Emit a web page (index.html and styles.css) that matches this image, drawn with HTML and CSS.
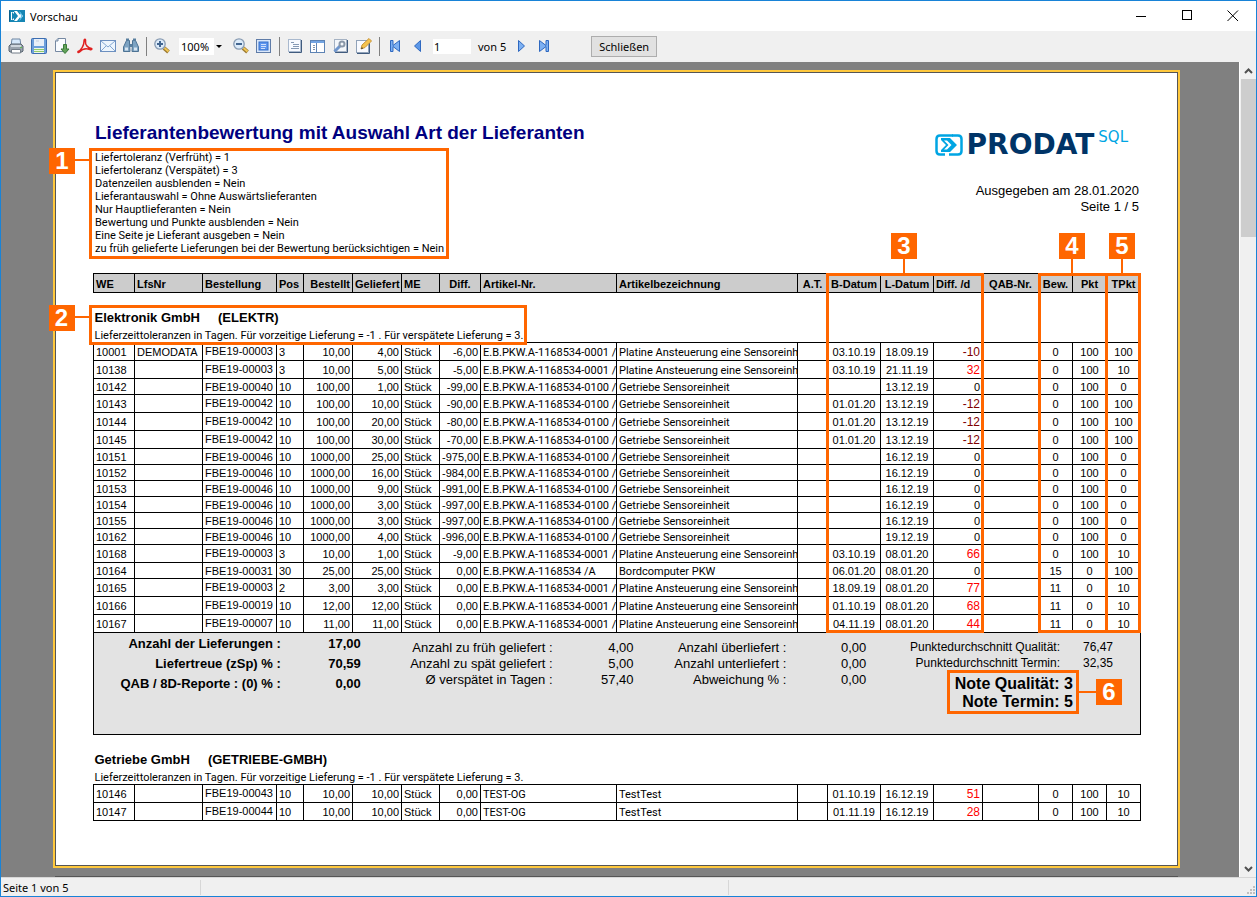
FILE: index.html
```html
<!DOCTYPE html>
<html lang="de">
<head>
<meta charset="utf-8">
<title>Vorschau</title>
<link rel="stylesheet" href="styles.css">
</head>
<body>
<div class="window">
  <header class="titlebar">
    <svg class="app-icon" width="16" height="14" viewBox="0 0 16 14"><path d="M0 1h16v12H0z" fill="#1686b4"/><path d="M2 3h3v8H2z" fill="#fff"/><path d="M5 2h3l4 5-4 5H5l4-5z" fill="#fff"/><path d="M3 3l4 4-4 4z" fill="#1686b4"/><path d="M11 3l3 4-3 4z" fill="#e9f6fc"/><path d="M10.500 2.500L13 7l-2.500 4.500" stroke="#3fb4e4" fill="none"/><path d="M.5 1.500v11" stroke="#0b5f8c"/></svg>
    <h1 class="window-title">Vorschau</h1>
    <button class="win-btn" aria-label="Minimieren"><svg width="12" height="12"><path d="M1 6.500h10" stroke="#000"/></svg></button>
    <button class="win-btn" aria-label="Maximieren"><svg width="12" height="12"><rect x="1.500" y=".5" width="9" height="9" fill="none" stroke="#000"/></svg></button>
    <button class="win-btn" aria-label="Fenster schließen"><svg width="12" height="12"><path d="M.5.5l10.500 10.500M11 .5L.5 11" stroke="#000" fill="none"/></svg></button>
  </header>

  <div class="toolbar">
    <button class="tool" aria-label="Drucken"><svg width="16" height="16"><path d="M4 1h8l1 7H3z" fill="#d6e8fb" stroke="#6f87a3"/><path d="M1 8l2-2h10l2 2v5l-1 1H2l-1-1z" fill="#9aa3ae" stroke="#596470"/><path d="M3 7h10v2H3z" fill="#cfd6de"/><path d="M3.500 11.500h9v3.500h-9z" fill="#fff" stroke="#737d88"/><path d="M12 9.500h2" stroke="#5fbd4d"/></svg></button>
    <button class="tool" aria-label="Speichern"><svg width="16" height="16"><rect x=".5" y=".5" width="15" height="15" rx="1" fill="#6c9fdc" stroke="#3c6db0"/><path d="M3 1h10v7H3z" fill="#e8eff8"/><path d="M5 3h3" stroke="#c3cddd"/><path d="M3 10h10v5H3z" fill="#eef6e8"/><path d="M3 11.500h10M3 13.500h10" stroke="#91cb69"/></svg></button>
    <button class="tool" aria-label="Exportieren"><svg width="16" height="16"><path d="M4 .5h7.500v13H1.500V3z" fill="#fafcff" stroke="#7689a2"/><path d="M4 .5V3H1.500" fill="#c9d5e4" stroke="#7689a2"/><path d="M9.500 6.500h3V11h2.500l-4 4.500-4-4.500h2.500z" fill="#62a25a" stroke="#397a37"/></svg></button>
    <button class="tool" aria-label="Als PDF speichern"><svg width="16" height="16"><path d="M1 13.500C4 12.500 7 7.500 7 3.500 7 .5 9 .5 8.500 3.500 8 7 11 10 14.500 10.500c1 .5 0 1.500-1.500 1C9 10 5.500 10.500 2.500 14c-1 1-2 .5-1.500-.5z" fill="none" stroke="#e02020" stroke-width="1.500"/></svg></button>
    <button class="tool" aria-label="Per E-Mail senden"><svg width="16" height="16"><rect x=".5" y="2.500" width="15" height="11" fill="#edf5fd" stroke="#6d90c0"/><path d="M1 13l5-5M15 13l-5-5M1 3l7 6 7-6" fill="none" stroke="#83a7d2"/></svg></button>
    <button class="tool" aria-label="Suchen"><svg width="16" height="16"><path d="M3.500 2.500h3V5L7 13.500H.5V9zM9.500 2.500h3L15.500 9v4.500H9L9.500 5z" fill="#7da3c2" stroke="#4d7394"/><path d="M7 6h2v3H7zM3 .5h3V3H3zM10 .5h3V3h-3z" fill="#587e9e"/><path d="M2 9.500h3v3H2zM11 9.500h3v3h-3z" fill="#d8e6f2"/></svg></button>
    <span class="sep"></span>
    <button class="tool" aria-label="Vergrößern"><svg width="16" height="16"><path d="M10 10l4.500 4" stroke="#9b7931" stroke-width="4"/><path d="M10.500 10l4 3.500" stroke="#f1c756" stroke-width="2"/><circle cx="6" cy="6" r="5.200" fill="#dcebfa" stroke="#889bb2" stroke-width="1.300"/><path d="M3 6h6M6 3v6" stroke="#416590" stroke-width="2"/></svg></button>
    <span class="zoom"><select aria-label="Zoom"><option>100%</option></select></span>
    <button class="tool" aria-label="Verkleinern"><svg width="16" height="16"><path d="M10 10l4.500 4" stroke="#9b7931" stroke-width="4"/><path d="M10.500 10l4 3.500" stroke="#f1c756" stroke-width="2"/><circle cx="6" cy="6" r="5.200" fill="#dcebfa" stroke="#889bb2" stroke-width="1.300"/><path d="M3 6h6" stroke="#416590" stroke-width="2"/></svg></button>
    <button class="tool" aria-label="Ganze Seite"><svg width="16" height="16"><rect x=".5" y="1.500" width="14" height="13" fill="#dbe8fa" stroke="#5f7ca8"/><rect x="3" y="4" width="9" height="8" fill="#5f96ee" stroke="#346fc9"/><path d="M5 6.500h5M5 8.500h5M5 10.500h4" stroke="#cfe0fb"/></svg></button>
    <span class="sep"></span>
    <button class="tool" aria-label="Gliederung"><svg width="16" height="16"><rect x="1.500" y="1.500" width="12" height="12" fill="#f7faff" stroke="#a9b9ce"/><path d="M2 14.500h12.500V2" stroke="#405b7e" fill="none"/><path d="M4 4.500h3M6 6.500h6M6 8.500h6M4 10.500h8" stroke="#8499b4"/></svg></button>
    <button class="tool" aria-label="Miniaturen"><svg width="16" height="16"><rect x=".5" y="2.500" width="14" height="12" fill="#fff" stroke="#5d83b4"/><path d="M1 3h13v2H1z" fill="#73a4e2"/><path d="M6.500 5v9" stroke="#5d83b4"/><path d="M3 7.500h2M3 9.500h2M3 11.500h2" stroke="#8193a9"/></svg></button>
    <button class="tool" aria-label="Seite einrichten"><svg width="16" height="16"><rect x="1.500" y="1.500" width="12" height="12" fill="#f4f7fb" stroke="#a5b2c3"/><path d="M2 14.500h12.500V2" stroke="#405b7e" fill="none"/><path d="M1.500 13.500l6-6" stroke="#7197cd" stroke-width="3"/><circle cx="9" cy="6" r="2.500" fill="none" stroke="#8a98a9" stroke-width="2"/></svg></button>
    <button class="tool" aria-label="Bearbeiten"><svg width="16" height="16"><rect x=".5" y="2.500" width="12" height="12" fill="#f8faff" stroke="#90a2b9"/><path d="M1 15.500h12.500V5" stroke="#405b7e" fill="none"/><path d="M5 11l1-4 7-6.500 2.500 2.500L9 9.500z" fill="#f6c44e" stroke="#c8953a"/><path d="M5 11l2-.5L6 9z" fill="#333"/></svg></button>
    <span class="sep"></span>
    <button class="tool" aria-label="Erste Seite"><svg width="16" height="16"><path d="M3.500 2.500h2.500v5l6.500-5v11L6 8.500v5H3.500z" fill="#7db0f2" stroke="#2e68c0"/></svg></button>
    <button class="tool" aria-label="Vorherige Seite"><svg width="16" height="16"><path d="M10.500 2.500v11L4.500 8z" fill="#5c98e8" stroke="#2e68c0"/></svg></button>
    <input class="page-no" type="text" value="1" aria-label="Seite">
    <span class="page-of">von 5</span>
    <button class="tool" aria-label="Nächste Seite"><svg width="16" height="16"><path d="M5.500 2.500v11l6-5.500z" fill="#7db0f2" stroke="#2e68c0"/></svg></button>
    <button class="tool" aria-label="Letzte Seite"><svg width="16" height="16"><path d="M3.500 2.500v11l6.500-5v5h2.500v-11H10v5z" fill="#7db0f2" stroke="#2e68c0"/></svg></button>
    <button class="close-btn">Schließen</button>
  </div>

  <div class="workspace">
    <main class="canvas">
      <article class="page">
        <header class="report-head">
          <div class="report-info">
            <h2 class="report-title">Lieferantenbewertung mit Auswahl Art der Lieferanten</h2>
            <ul class="params marked">
              <li>Liefertoleranz (Verfrüht) = 1</li>
              <li>Liefertoleranz (Verspätet) = 3</li>
              <li>Datenzeilen ausblenden = Nein</li>
              <li>Lieferantauswahl = Ohne Auswärtslieferanten</li>
              <li>Nur Hauptlieferanten = Nein</li>
              <li>Bewertung und Punkte ausblenden = Nein</li>
              <li>Eine Seite je Lieferant ausgeben = Nein</li>
              <li>zu früh gelieferte Lieferungen bei der Bewertung berücksichtigen = Nein</li>
              <li class="badge badge-left">1</li>
            </ul>
          </div>
          <div class="report-brand">
            <div class="logo">
              <svg width="28" height="22" viewBox="0 0 28 22"><path d="M10 1.500H5Q1.500 1.500 1.500 5v12q0 3.500 3.500 3.500h5M17 1.500h6q3.500 0 3.500 3.500v12q0 3.500-3.500 3.500h-9" fill="none" stroke="#00a5e3" stroke-width="2.500"/><path d="M10 1.500h8" stroke="#00a5e3" stroke-width="2.500"/><path d="M6 4h9l7 7-7 7H6v-2l5-5-5-5z" fill="#00a5e3"/><path d="M9 6.500h3l4.500 4.500-4.500 4.500H9l4.500-4.500z" fill="#fff"/></svg>
              <span class="logo-name">PRODAT</span><span class="logo-sql">SQL</span>
            </div>
            <p>Ausgegeben am 28.01.2020</p>
            <p>Seite 1 / 5</p>
          </div>
        </header>

        <div class="report-body">
          <table class="report">
            <colgroup><col class="w41"><col class="w68"><col class="w74"><col class="w27"><col class="w49"><col class="w49"><col class="w38"><col class="w41"><col class="w136"><col class="w181"><col class="w30"><col class="w53"><col class="w53"><col class="w49"><col class="w56"><col class="w34"><col class="w34"><col class="w34"></colgroup>
            <thead>
              <tr><th>WE</th><th>LfsNr</th><th>Bestellung</th><th>Pos</th><th>Bestellt</th><th>Geliefert</th><th>ME</th><th>Diff.</th><th>Artikel-Nr.</th><th>Artikelbezeichnung</th><th>A.T.</th><th>B-Datum</th><th>L-Datum</th><th>Diff. /d</th><th>QAB-Nr.</th><th>Bew.</th><th>Pkt</th><th>TPkt</th></tr>
            </thead>
            <tbody>
              <tr class="group"><td colspan="18"><div class="group-head"><h3>Elektronik GmbH &nbsp;&nbsp;&nbsp; (ELEKTR)</h3><p>Lieferzeittoleranzen in Tagen. Für vorzeitige Lieferung = -1 . Für verspätete Lieferung = 3.</p><div class="group-mark marked"><span class="badge badge-left">2</span></div></div></td></tr>
              <tr class="tall"><td>10001</td><td>DEMODATA</td><td>FBE19-00003</td><td>3</td><td>10,00</td><td>4,00</td><td>Stück</td><td>-6,00</td><td>E.B.PKW.A-1168534-0001 /</td><td>Platine Ansteuerung eine Sensoreinh</td><td></td><td>03.10.19</td><td>18.09.19</td><td class="early">-10</td><td></td><td>0</td><td>100</td><td>100</td></tr>
              <tr class="tall"><td>10138</td><td></td><td>FBE19-00003</td><td>3</td><td>10,00</td><td>5,00</td><td>Stück</td><td>-5,00</td><td>E.B.PKW.A-1168534-0001 /</td><td>Platine Ansteuerung eine Sensoreinh</td><td></td><td>03.10.19</td><td>21.11.19</td><td class="late">32</td><td></td><td>0</td><td>100</td><td>10</td></tr>
              <tr><td>10142</td><td></td><td>FBE19-00040</td><td>10</td><td>100,00</td><td>1,00</td><td>Stück</td><td>-99,00</td><td>E.B.PKW.A-1168534-0100 /</td><td>Getriebe Sensoreinheit</td><td></td><td></td><td>13.12.19</td><td>0</td><td></td><td>0</td><td>100</td><td>0</td></tr>
              <tr class="tall"><td>10143</td><td></td><td>FBE19-00042</td><td>10</td><td>100,00</td><td>10,00</td><td>Stück</td><td>-90,00</td><td>E.B.PKW.A-1168534-0100 /</td><td>Getriebe Sensoreinheit</td><td></td><td>01.01.20</td><td>13.12.19</td><td class="early">-12</td><td></td><td>0</td><td>100</td><td>100</td></tr>
              <tr class="tall"><td>10144</td><td></td><td>FBE19-00042</td><td>10</td><td>100,00</td><td>20,00</td><td>Stück</td><td>-80,00</td><td>E.B.PKW.A-1168534-0100 /</td><td>Getriebe Sensoreinheit</td><td></td><td>01.01.20</td><td>13.12.19</td><td class="early">-12</td><td></td><td>0</td><td>100</td><td>100</td></tr>
              <tr class="tall"><td>10145</td><td></td><td>FBE19-00042</td><td>10</td><td>100,00</td><td>30,00</td><td>Stück</td><td>-70,00</td><td>E.B.PKW.A-1168534-0100 /</td><td>Getriebe Sensoreinheit</td><td></td><td>01.01.20</td><td>13.12.19</td><td class="early">-12</td><td></td><td>0</td><td>100</td><td>100</td></tr>
              <tr><td>10151</td><td></td><td>FBE19-00046</td><td>10</td><td>1000,00</td><td>25,00</td><td>Stück</td><td>-975,00</td><td>E.B.PKW.A-1168534-0100 /</td><td>Getriebe Sensoreinheit</td><td></td><td></td><td>16.12.19</td><td>0</td><td></td><td>0</td><td>100</td><td>0</td></tr>
              <tr><td>10152</td><td></td><td>FBE19-00046</td><td>10</td><td>1000,00</td><td>16,00</td><td>Stück</td><td>-984,00</td><td>E.B.PKW.A-1168534-0100 /</td><td>Getriebe Sensoreinheit</td><td></td><td></td><td>16.12.19</td><td>0</td><td></td><td>0</td><td>100</td><td>0</td></tr>
              <tr><td>10153</td><td></td><td>FBE19-00046</td><td>10</td><td>1000,00</td><td>9,00</td><td>Stück</td><td>-991,00</td><td>E.B.PKW.A-1168534-0100 /</td><td>Getriebe Sensoreinheit</td><td></td><td></td><td>16.12.19</td><td>0</td><td></td><td>0</td><td>100</td><td>0</td></tr>
              <tr><td>10154</td><td></td><td>FBE19-00046</td><td>10</td><td>1000,00</td><td>3,00</td><td>Stück</td><td>-997,00</td><td>E.B.PKW.A-1168534-0100 /</td><td>Getriebe Sensoreinheit</td><td></td><td></td><td>16.12.19</td><td>0</td><td></td><td>0</td><td>100</td><td>0</td></tr>
              <tr><td>10155</td><td></td><td>FBE19-00046</td><td>10</td><td>1000,00</td><td>3,00</td><td>Stück</td><td>-997,00</td><td>E.B.PKW.A-1168534-0100 /</td><td>Getriebe Sensoreinheit</td><td></td><td></td><td>16.12.19</td><td>0</td><td></td><td>0</td><td>100</td><td>0</td></tr>
              <tr><td>10162</td><td></td><td>FBE19-00046</td><td>10</td><td>1000,00</td><td>4,00</td><td>Stück</td><td>-996,00</td><td>E.B.PKW.A-1168534-0100 /</td><td>Getriebe Sensoreinheit</td><td></td><td></td><td>19.12.19</td><td>0</td><td></td><td>0</td><td>100</td><td>0</td></tr>
              <tr class="tall"><td>10168</td><td></td><td>FBE19-00003</td><td>3</td><td>10,00</td><td>1,00</td><td>Stück</td><td>-9,00</td><td>E.B.PKW.A-1168534-0001 /</td><td>Platine Ansteuerung eine Sensoreinh</td><td></td><td>03.10.19</td><td>08.01.20</td><td class="late">66</td><td></td><td>0</td><td>100</td><td>10</td></tr>
              <tr><td>10164</td><td></td><td>FBE19-00031</td><td>30</td><td>25,00</td><td>25,00</td><td>Stück</td><td>0,00</td><td>E.B.PKW.A-1168534 /A</td><td>Bordcomputer PKW</td><td></td><td>06.01.20</td><td>08.01.20</td><td>0</td><td></td><td>15</td><td>0</td><td>100</td></tr>
              <tr class="tall"><td>10165</td><td></td><td>FBE19-00003</td><td>2</td><td>3,00</td><td>3,00</td><td>Stück</td><td>0,00</td><td>E.B.PKW.A-1168534-0001 /</td><td>Platine Ansteuerung eine Sensoreinh</td><td></td><td>18.09.19</td><td>08.01.20</td><td class="late">77</td><td></td><td>11</td><td>0</td><td>10</td></tr>
              <tr class="tall"><td>10166</td><td></td><td>FBE19-00019</td><td>10</td><td>12,00</td><td>12,00</td><td>Stück</td><td>0,00</td><td>E.B.PKW.A-1168534-0001 /</td><td>Platine Ansteuerung eine Sensoreinh</td><td></td><td>01.10.19</td><td>08.01.20</td><td class="late">68</td><td></td><td>11</td><td>0</td><td>10</td></tr>
              <tr class="tall"><td>10167</td><td></td><td>FBE19-00007</td><td>10</td><td>11,00</td><td>11,00</td><td>Stück</td><td>0,00</td><td>E.B.PKW.A-1168534-0001 /</td><td>Platine Ansteuerung eine Sensoreinh</td><td></td><td>04.11.19</td><td>08.01.20</td><td class="late">44</td><td></td><td>11</td><td>0</td><td>10</td></tr>
              <tr class="summary-row"><td colspan="18">
                <div class="summary">
                  <dl class="totals"><dt>Anzahl der Lieferungen :</dt><dd>17,00</dd><dt>Liefertreue (zSp) % :</dt><dd>70,59</dd><dt>QAB / 8D-Reporte : (0) % :</dt><dd>0,00</dd></dl>
                  <dl class="delays"><dt>Anzahl zu früh geliefert :</dt><dd>4,00</dd><dt>Anzahl zu spät geliefert :</dt><dd>5,00</dd><dt>Ø verspätet in Tagen :</dt><dd>57,40</dd></dl>
                  <dl class="amounts"><dt>Anzahl überliefert :</dt><dd>0,00</dd><dt>Anzahl unterliefert :</dt><dd>0,00</dd><dt>Abweichung % :</dt><dd>0,00</dd></dl>
                  <div class="scores">
                    <dl class="averages"><dt>Punktedurchschnitt Qualität:</dt><dd>76,47</dd><dt>Punktedurchschnitt Termin:</dt><dd>32,35</dd></dl>
                    <div class="grades marked"><p>Note Qualität: 3</p><p>Note Termin: 5</p><span class="badge badge-right">6</span></div>
                  </div>
                </div>
              </td></tr>
            </tbody>
            <tbody>
              <tr class="group"><td colspan="18"><div class="group-head"><h3>Getriebe GmbH &nbsp;&nbsp;&nbsp; (GETRIEBE-GMBH)</h3><p>Lieferzeittoleranzen in Tagen. Für vorzeitige Lieferung = -1 . Für verspätete Lieferung = 3.</p></div></td></tr>
              <tr class="tall"><td>10146</td><td></td><td>FBE19-00043</td><td>10</td><td>10,00</td><td>10,00</td><td>Stück</td><td>0,00</td><td>TEST-OG</td><td>TestTest</td><td></td><td>01.10.19</td><td>16.12.19</td><td class="late">51</td><td></td><td>0</td><td>100</td><td>10</td></tr>
              <tr class="tall"><td>10147</td><td></td><td>FBE19-00044</td><td>10</td><td>10,00</td><td>10,00</td><td>Stück</td><td>0,00</td><td>TEST-OG</td><td>TestTest</td><td></td><td>01.11.19</td><td>16.12.19</td><td class="late">28</td><td></td><td>0</td><td>100</td><td>10</td></tr>
            </tbody>
          </table>
          <div class="column-marks">
            <div class="mark-dates marked"><span class="badge badge-top">3</span></div>
            <div class="mark-points marked"><span class="badge badge-top">4</span></div>
            <div class="mark-total marked"><span class="badge badge-top">5</span></div>
          </div>
        </div>
      </article>
      <div class="next-page"></div>
    </main>
    <div class="scrollbar">
      <svg width="15" height="17"><path d="M4 11l3.500-3.500L11 11" fill="none" stroke="#505050" stroke-width="2"/></svg>
      <div class="thumb"></div>
      <svg class="down" width="15" height="16"><path d="M4 6l3.500 3.500L11 6" fill="none" stroke="#505050" stroke-width="2"/></svg>
    </div>
  </div>

  <footer class="statusbar">
    <span class="status-page">Seite 1 von 5</span>
    <span class="status-mid"></span>
    <svg class="grip" width="10" height="10"><path d="M7 0h2v2H7zM4 3h2v2H4zM7 3h2v2H7zM1 6h2v2H1zM4 6h2v2H4zM7 6h2v2H7z" fill="#bfbfbf"/></svg>
  </footer>
</div>
</body>
</html>
```

FILE: styles.css
```css
* { box-sizing: border-box; }
body, h1, h2, h3, p, ul, dl, dt, dd { margin: 0; padding: 0; }
body { font-family: "Liberation Sans", Arial, sans-serif; font-size: 11px; color: #000; }
button { padding: 0; border: 0; background: none; font: inherit; color: inherit; }

.window {
  display: flex; flex-direction: column;
  height: 100vh; border: 1px solid #1883d7; background: #fff;
  overflow: hidden;
}

.titlebar { display: flex; align-items: center; height: 30px; padding-left: 8px; font-family: "Noto Sans", "Open Sans", sans-serif; }
.window-title { flex: 1; margin-left: 5px; font-size: 11px; font-weight: 400; }
.win-btn { display: flex; align-items: center; justify-content: center; width: 46px; height: 30px; }

.toolbar {
  display: flex; align-items: center; gap: 7px;
  height: 31px; padding-left: 7px; background: #f0f0f0;
  font-family: "Noto Sans", "Open Sans", sans-serif; font-size: 11px;
}
.tool { width: 16px; height: 16px; margin-bottom: 2px; }
.tool svg { display: block; }
.sep { width: 1px; height: 19px; background: #808080; }
.zoom { position: relative; width: 46px; height: 17px; margin: 0 1px 0 2px; background: #fff; }
.zoom select { width: 100%; height: 100%; padding: 0 0 0 2px; border: 0; background: none; appearance: none; font: inherit; color: #000; }
.zoom::before { content: ""; position: absolute; right: 0; top: 0; bottom: 0; width: 11px; background: #f0f0f0; }
.zoom::after { content: ""; position: absolute; right: 3px; top: 7px; border: 3px solid transparent; border-top-color: #000; border-bottom: 0; }
.page-no { width: 38px; height: 15px; padding: 0 1px; border: 0; background: #fff; font: inherit; }
.close-btn { width: 66px; height: 21px; margin-left: 32px; border: 1px solid #adadad; background: #e1e1e1; }

.workspace { display: flex; flex: 1; min-height: 0; background: #808080; }
.canvas { flex: 1; min-width: 0; padding: 8px 59px 0 52px; overflow: hidden; }
.page {
  padding: 48px 36px 44px 37px;
  border: 1px solid #555; outline: 2px solid #ffc83c;
  margin: 2px; background: #fff;
}
.next-page { margin: 10px 2px 0; border-top: 1px solid #555; }

.report-head { display: flex; justify-content: space-between; margin-bottom: 14px; }
.report-title { padding-left: 2px; margin-bottom: 3px; font-size: 19px; line-height: 24px; color: #000080; }

.marked { border: 3px solid #f60; }
.badge {
  position: absolute; width: 26px; height: 26px;
  background: #f60; color: #fff;
  font: 700 24px/26px "Liberation Sans", Arial, sans-serif; text-align: center;
}
.badge::after { content: ""; position: absolute; background: #f60; }
.badge-left { left: -43px; top: -3px; }
.badge-left::after { left: 26px; top: 11px; width: 14px; height: 2px; }
.badge-right { right: -46px; top: 6px; }
.badge-right::after { right: 26px; top: 12px; width: 17px; height: 2px; }
.badge-top { left: 50%; top: -43px; margin-left: -14px; }
.badge-top::after { left: 12px; top: 26px; width: 2px; height: 14px; }

.params, .group-head p, .report td:nth-child(9), .report td:nth-child(10) { font-family: Roboto, "Liberation Sans", sans-serif; }
.params { position: relative; width: fit-content; margin-left: -4px; padding: 0 2px 1px 3px; list-style: none; line-height: 13px; white-space: nowrap; }
.report-brand { padding: 9px 2px 0 0; text-align: right; font-size: 13px; line-height: 16px; }
.logo { display: flex; align-items: center; justify-content: flex-end; height: 30px; margin: 0 11px 23px 0; }
.logo-name { margin-left: 4px; color: #003467; font: 700 28px/30px "DejaVu Sans", sans-serif; }
.logo-sql { align-self: flex-start; margin-left: 4px; color: #00a5e3; font: 400 15px/14px "DejaVu Sans", sans-serif; }

.report-body { position: relative; }
.report { width: 100%; table-layout: fixed; border-collapse: collapse; line-height: 13px; white-space: nowrap; }
.w27 { width: 27px; } .w30 { width: 30px; } .w34 { width: 34px; } .w38 { width: 38px; }
.w41 { width: 41px; } .w49 { width: 49px; } .w53 { width: 53px; } .w56 { width: 56px; }
.w68 { width: 68px; } .w74 { width: 74px; } .w136 { width: 136px; } .w181 { width: 181px; }
.report th, .report td { padding: 1px 2px 0; border: 1px solid #000; overflow: hidden; text-align: left; }
.report th { padding-top: 2px; background: #ccc; }
.report thead tr { height: 19px; }
.report tbody tr { height: 16px; }
.report tbody .tall { height: 18px; }
.report .tall td:nth-child(3) { padding-top: 0; padding-bottom: 1px; }
.report tr > :nth-child(5), .report tr > :nth-child(6), .report td:nth-child(8), .report td:nth-child(14) { text-align: right; }
.report th:nth-child(8), .report tr > :nth-child(11), .report tr > :nth-child(12), .report tr > :nth-child(13),
.report tr > :nth-child(15), .report tr > :nth-child(16), .report tr > :nth-child(17), .report tr > :nth-child(18) { text-align: center; }
.report .early, .report .late { font-size: 12px; color: #800000; }
.report .late { color: #f00; }

.report tbody .group { height: 50px; }
.report .group td { padding: 0 1px; border-left: 0; border-right: 0; overflow: visible; vertical-align: bottom; }
.group-head { position: relative; width: fit-content; }
.group-head h3 { margin-bottom: 2px; font-size: 13px; line-height: 18px; }
.group-mark { position: absolute; inset: -4px -4px -3px -6px; }

.report tbody .summary-row { height: 102px; }
.report .summary-row td { padding: 0; background: #e3e3e3; vertical-align: top; text-align: left; overflow: visible; }
.summary { display: grid; grid-template-columns: 267fr 273fr 233fr 274fr; }
.summary dl { display: grid; text-align: right; align-content: start; }
.totals { grid-template-columns: 187fr 80fr; padding-top: 1px; font-size: 13px; font-weight: 700; line-height: 20px; }
.delays { grid-template-columns: 192fr 81fr; }
.amounts { grid-template-columns: 153fr 80fr; }
.delays, .amounts { padding-top: 7px; font-size: 13px; line-height: 16px; }
.scores { padding-right: 27px; }
.averages { grid-template-columns: 194fr 53fr; padding-top: 6px; font-size: 12px; line-height: 16px; }
.grades { position: relative; width: fit-content; margin: -1px 34px 0 auto; padding: 2px 3px 0 5px; font-size: 16px; font-weight: 700; line-height: 18px; text-align: right; }

.column-marks {
  position: absolute; inset: 0 0 auto; height: 360px;
  display: grid; grid-template-columns: 733fr 155fr 57fr 67fr 36fr;
  pointer-events: none;
}
.column-marks > div { position: relative; }
.mark-dates { grid-column: 2; margin-right: -3px; }
.mark-points { grid-column: 4; margin-right: -3px; }
.mark-total { grid-column: 5; }

.scrollbar { display: flex; flex-direction: column; width: 17px; padding-left: 1px; border-left: 1px solid #fff; background: #f0f0f0; }
.thumb { width: 15px; height: 158px; background: #cdcdcd; }
.scrollbar .down { margin-top: auto; }

.statusbar { display: flex; align-items: center; height: 19px; border-top: 1px solid #d7d7d7; background: #f0f0f0; font-family: "Noto Sans", "Open Sans", sans-serif; font-size: 11px; }
.status-page { width: 200px; height: 15px; padding-left: 2px; border-right: 1px solid #d7d7d7; line-height: 15px; }
.status-mid { width: 528px; height: 15px; border-right: 1px solid #d7d7d7; }
.grip { align-self: flex-end; margin-left: auto; }
```
